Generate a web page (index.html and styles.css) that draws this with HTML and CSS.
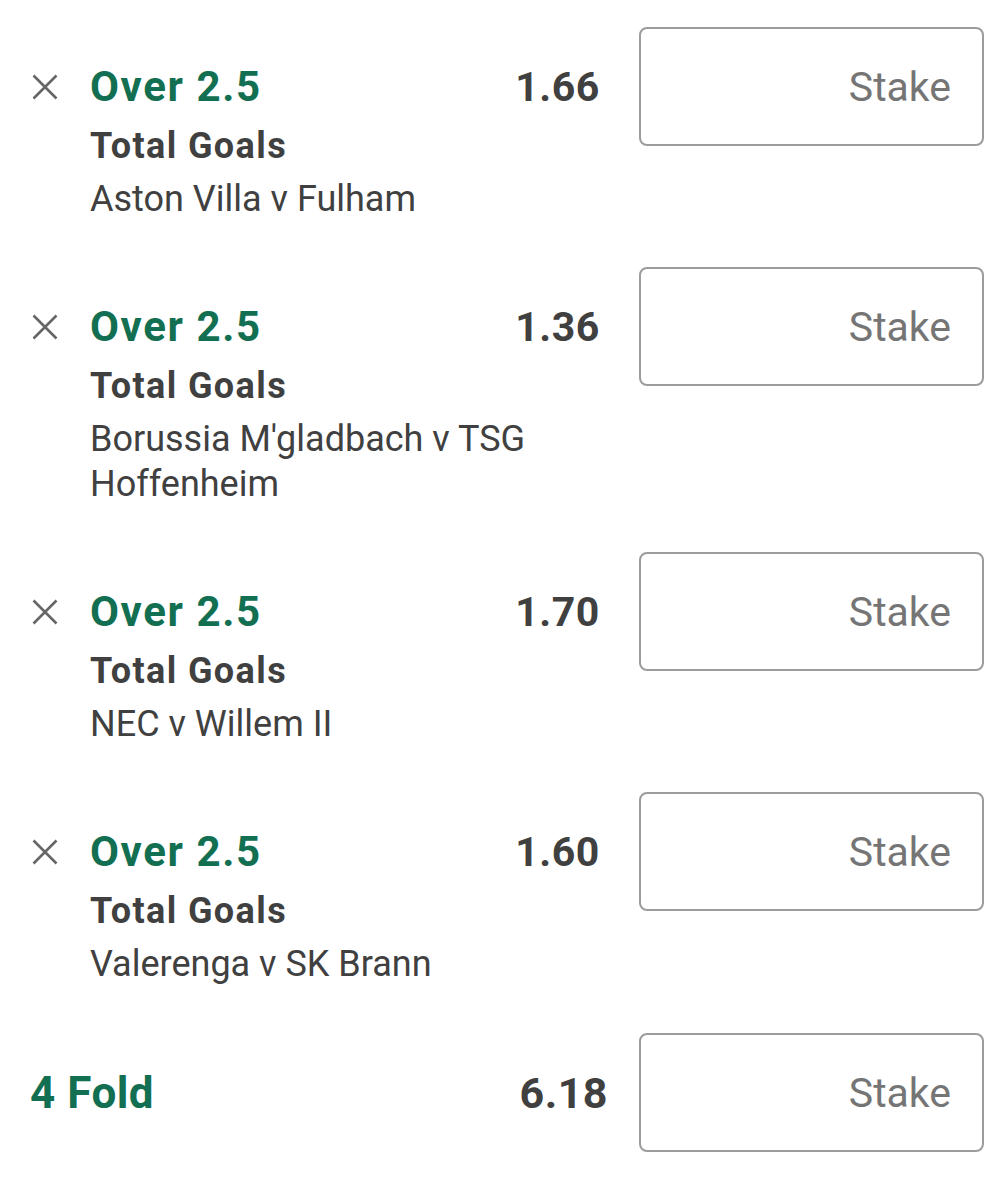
FILE: index.html
```html
<!DOCTYPE html>
<html lang="en">
<head>
<meta charset="utf-8">
<title>Bet slip</title>
<link rel="stylesheet" href="styles.css">
</head>
<body>
<div class="slip">
  <div class="leg">
    <span class="remove"><svg viewBox="0 0 26 26" width="26" height="26"><path d="M1.5 1.5L24.5 24.5M24.5 1.5L1.5 24.5"/></svg></span>
    <div class="main">
      <div class="head"><span class="sel">Over 2.5</span><span class="odds">1.66</span></div>
      <div class="market">Total Goals</div>
      <div class="event">Aston Villa v Fulham</div>
    </div>
    <div class="stake">Stake</div>
  </div>
  <div class="leg">
    <span class="remove"><svg viewBox="0 0 26 26" width="26" height="26"><path d="M1.5 1.5L24.5 24.5M24.5 1.5L1.5 24.5"/></svg></span>
    <div class="main">
      <div class="head"><span class="sel">Over 2.5</span><span class="odds">1.36</span></div>
      <div class="market">Total Goals</div>
      <div class="event">Borussia M'gladbach v TSG Hoffenheim</div>
    </div>
    <div class="stake">Stake</div>
  </div>
  <div class="leg">
    <span class="remove"><svg viewBox="0 0 26 26" width="26" height="26"><path d="M1.5 1.5L24.5 24.5M24.5 1.5L1.5 24.5"/></svg></span>
    <div class="main">
      <div class="head"><span class="sel">Over 2.5</span><span class="odds">1.70</span></div>
      <div class="market">Total Goals</div>
      <div class="event">NEC v Willem II</div>
    </div>
    <div class="stake">Stake</div>
  </div>
  <div class="leg">
    <span class="remove"><svg viewBox="0 0 26 26" width="26" height="26"><path d="M1.5 1.5L24.5 24.5M24.5 1.5L1.5 24.5"/></svg></span>
    <div class="main">
      <div class="head"><span class="sel">Over 2.5</span><span class="odds">1.60</span></div>
      <div class="market">Total Goals</div>
      <div class="event">Valerenga v SK Brann</div>
    </div>
    <div class="stake">Stake</div>
  </div>
  <div class="fold">
    <div class="fold-head"><span class="sel fold-name">4 Fold</span><span class="odds">6.18</span></div>
    <div class="stake">Stake</div>
  </div>
</div>
</body>
</html>
```

FILE: styles.css
```css
html, body {
  margin: 0;
  padding: 0;
  background: #ffffff;
}
body {
  font-family: Roboto, "Noto Sans", "Liberation Sans", sans-serif;
  color: #404040;
  width: 1007px;
}
.slip {
  padding-top: 27px;
}
.leg {
  display: flex;
  align-items: flex-start;
  padding: 0 23px 45px 32px;
}
.remove {
  width: 26px;
  height: 26px;
  margin-top: 47px;
  flex: none;
  display: block;
}
.remove svg {
  display: block;
  fill: none;
  stroke: #666666;
  stroke-width: 2.6;
}
.main {
  flex: 1;
  margin-left: 32px;
  margin-right: 40px;
}
.head {
  display: flex;
  justify-content: space-between;
  align-items: center;
  margin-top: 35px;
  height: 50px;
}
.sel {
  font-size: 42px;
  font-weight: 700;
  color: #136f51;
  line-height: 50px;
  letter-spacing: 1.6px;
}
.odds {
  font-size: 41px;
  font-weight: 700;
  color: #404040;
  line-height: 50px;
  letter-spacing: 0.6px;
  margin-right: -1px;
}
.market {
  font-size: 36px;
  font-weight: 700;
  line-height: 46px;
  margin-top: 11px;
  letter-spacing: 1.4px;
}
.event {
  font-size: 36px;
  font-weight: 400;
  line-height: 45px;
  margin-top: 8px;
}
.stake {
  flex: none;
  box-sizing: border-box;
  width: 345px;
  height: 119px;
  border: 2px solid #9c9c9c;
  border-radius: 8px;
  display: flex;
  align-items: center;
  justify-content: flex-end;
  padding-right: 31px;
  font-size: 41px;
  color: #757575;
}
.fold {
  display: flex;
  align-items: center;
  padding: 1px 23px 0 30px;
}
.fold-head {
  flex: 1;
  display: flex;
  justify-content: space-between;
  align-items: center;
  margin-right: 32px;
}
.fold-name {
  font-size: 44px;
  letter-spacing: 0.5px;
}
.fold .odds {
  font-size: 43px;
  letter-spacing: 0.5px;
  margin-right: -1px;
}
```
